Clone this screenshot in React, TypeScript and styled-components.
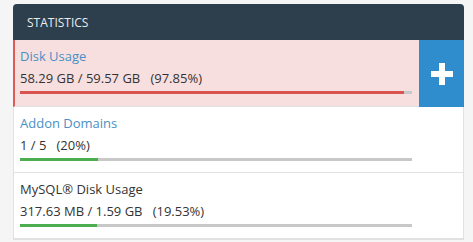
import React from "react";
import styled, { createGlobalStyle } from "styled-components";

type Stat = {
  title: string;
  value: string;
  percent: number;
  link?: boolean;
  alert?: boolean;
};

const STATS: Stat[] = [
  {
    title: "Disk Usage",
    value: "58.29 GB / 59.57 GB\u00a0\u00a0\u00a0(97.85%)",
    percent: 97.85,
    link: true,
    alert: true,
  },
  {
    title: "Addon Domains",
    value: "1 / 5\u00a0\u00a0\u00a0(20%)",
    percent: 20,
    link: true,
  },
  {
    title: "MySQL® Disk Usage",
    value: "317.63 MB / 1.59 GB\u00a0\u00a0\u00a0(19.53%)",
    percent: 19.53,
  },
];

const App = () => {
  return (
    <>
      <GlobalStyle />
      <Panel>
        <PanelHeader>Statistics</PanelHeader>
        {STATS.map((stat) => (
          <StatRow key={stat.title} $alert={stat.alert}>
            <StatBody $alert={stat.alert}>
              <StatTitle $link={stat.link}>{stat.title}</StatTitle>
              <StatValue>{stat.value}</StatValue>
              <BarTrack>
                <BarFill
                  $alert={stat.alert}
                  style={{ width: `${stat.percent}%` }}
                />
              </BarTrack>
            </StatBody>
            {stat.alert ? (
              <UpgradeButton aria-label="Upgrade">
                <svg width="22" height="22" viewBox="0 0 22 22">
                  <rect x="0" y="8" width="22" height="6" fill="#fff" />
                  <rect x="8" y="0" width="6" height="22" fill="#fff" />
                </svg>
              </UpgradeButton>
            ) : (
              <span />
            )}
          </StatRow>
        ))}
      </Panel>
    </>
  );
};

export default App;

const GlobalStyle = createGlobalStyle`
  body {
    margin: 0;
    background: #f5f5f5;
    font-family: "Open Sans", "Liberation Sans", sans-serif;
    color: #333;
  }
`;

const Panel = styled.div`
  margin: 4px 0 0 13px;
  width: 451px;
  box-sizing: border-box;
  background: #fff;
  border: 1px solid #e1e1e1;
  border-top: none;
  border-radius: 4px 4px 0 0;
`;

const PanelHeader = styled.div`
  height: 36px;
  margin: 0 -1px;
  padding-left: 14px;
  display: flex;
  align-items: center;
  background: #2d3e4c;
  color: #e9edf0;
  font-size: 12px;
  text-transform: uppercase;
  border-radius: 4px 4px 0 0;
`;

const StatRow = styled.div<{ $alert?: boolean }>`
  display: grid;
  grid-template-columns: 1fr 44px;
  border-bottom: 1px solid #e2e2e2;
  background: ${(p) => (p.$alert ? "#f8dfdf" : "#fff")};
  margin-left: ${(p) => (p.$alert ? "-1px" : "0")};
  border-left: ${(p) => (p.$alert ? "2px solid #dc5a58" : "none")};
`;

const StatBody = styled.div<{ $alert?: boolean }>`
  padding: 5px 7px ${(p) => (p.$alert ? "12px" : "11px")}
    ${(p) => (p.$alert ? "5px" : "6px")};
`;

const StatTitle = styled.div<{ $link?: boolean }>`
  font-size: 13px;
  line-height: 22px;
  color: ${(p) => (p.$link ? "#4a8fc4" : "#333")};
`;

const StatValue = styled.div`
  font-size: 13px;
  line-height: 22px;
  color: #333;
  white-space: pre;
`;

const BarTrack = styled.div`
  margin-top: 2px;
  height: 3px;
  background: #c8c8c8;
`;

const BarFill = styled.div<{ $alert?: boolean }>`
  height: 100%;
  background: ${(p) => (p.$alert ? "#d9534f" : "#4cae50")};
`;

const UpgradeButton = styled.button`
  margin: 0 -1px -1px 0;
  padding: 0;
  border: none;
  background: #2f8dcd;
  display: flex;
  align-items: center;
  justify-content: center;
  cursor: pointer;
`;
